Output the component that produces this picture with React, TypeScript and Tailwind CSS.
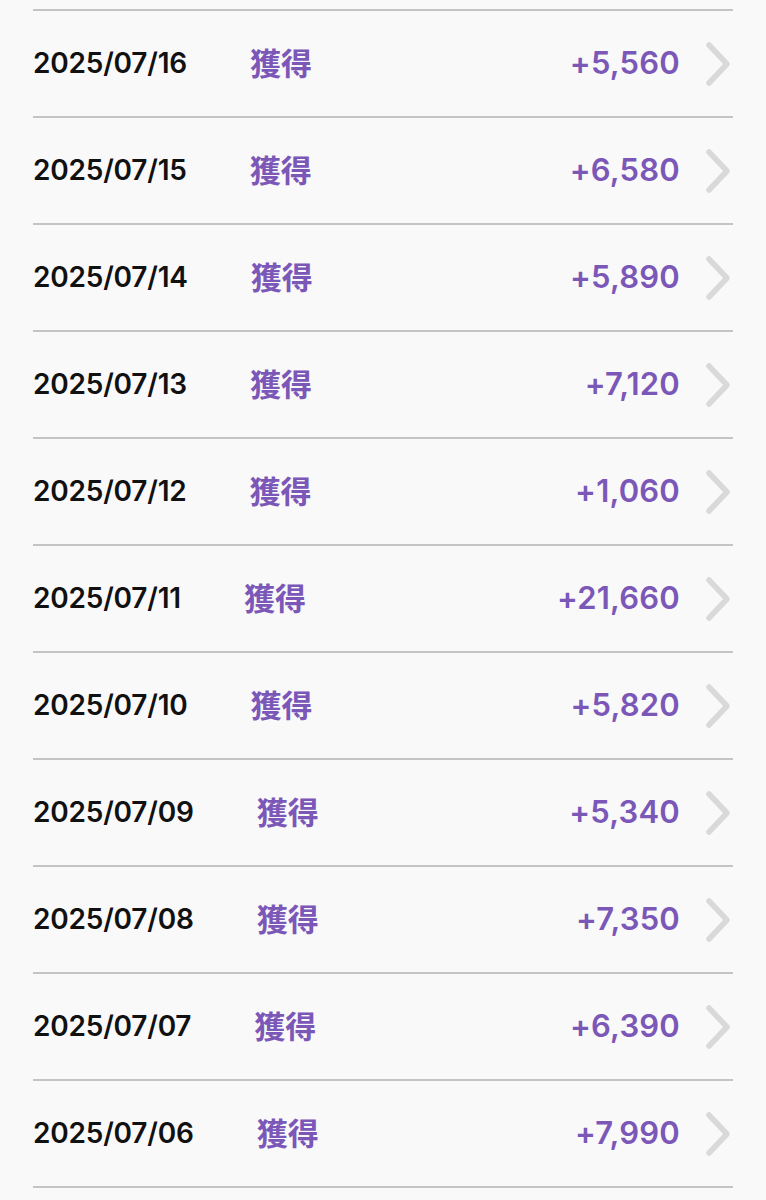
const rows = [
  { date: '2025/07/16', amount: '+5,560' },
  { date: '2025/07/15', amount: '+6,580' },
  { date: '2025/07/14', amount: '+5,890' },
  { date: '2025/07/13', amount: '+7,120' },
  { date: '2025/07/12', amount: '+1,060' },
  { date: '2025/07/11', amount: '+21,660' },
  { date: '2025/07/10', amount: '+5,820' },
  { date: '2025/07/09', amount: '+5,340' },
  { date: '2025/07/08', amount: '+7,350' },
  { date: '2025/07/07', amount: '+6,390' },
  { date: '2025/07/06', amount: '+7,990' },
];

function Chevron() {
  return (
    <svg width="26" height="46" viewBox="0 0 26 46" fill="none" className="shrink-0">
      <path d="M4 4 L22 23 L4 42" stroke="#d9d9d9" strokeWidth="5.5" strokeLinecap="round" strokeLinejoin="round" />
    </svg>
  );
}

export default function App() {
  return (
    <div className="min-h-[1200px] bg-[#f9f9f9] pt-[9px] px-[33px] font-['Inter','Noto_Sans_CJK_JP',sans-serif]">
      <div className="border-b-2 border-[#c4c4c4]">
        {rows.map(row => (
          <div key={row.date} className="h-[107px] border-t-2 border-[#c4c4c4] flex items-center">
            <span className="mb-[2px] text-[28px] font-semibold text-[#111] tracking-[-0.2px]">{row.date}</span>
            <span className="ml-[63px] mb-[2px] text-[31px] font-bold text-[#7b57b8] font-['Noto_Sans_CJK_JP',sans-serif]">獲得</span>
            <span className="ml-auto text-[31px] font-semibold text-[#7b57b8] tracking-[0.2px]">{row.amount}</span>
            <div className="ml-[25px] mr-[2px] flex items-center">
              <Chevron />
            </div>
          </div>
        ))}
      </div>
    </div>
  );
}
